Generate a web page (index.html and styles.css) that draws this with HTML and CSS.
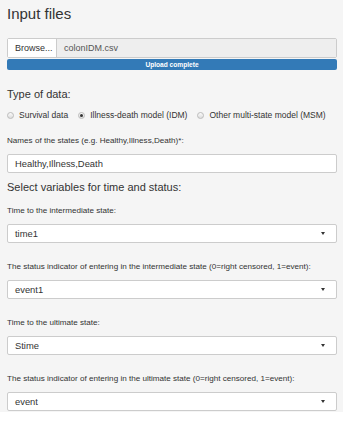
FILE: index.html
```html
<!DOCTYPE html>
<html>
  <head>
    <title>Input files</title>
    <meta charset="UTF-8" />
    <meta name="viewport" content="width=device-width, initial-scale=1" />
    <link rel="stylesheet" href="styles.css">
  </head>
  <body>
    <div class="well">
      <h3>Input files</h3>

      <div class="file-input">
        <span class="browse">Browse...</span>
        <span class="file-name">colonIDM.csv</span>
      </div>
      <div class="progress">Upload complete</div>

      <h4 class="type-title">Type of data:</h4>
      <div class="radios">
        <label class="radio"><span class="dot"></span>Survival data</label>
        <label class="radio"><span class="dot checked"></span>Illness-death model (IDM)</label>
        <label class="radio"><span class="dot"></span>Other multi-state model (MSM)</label>
      </div>

      <div class="form-group first">
        <label class="control-label">Names of the states (e.g. Healthy,Illness,Death)*:</label>
        <div class="text-input">Healthy,Illness,Death</div>
      </div>

      <h4 class="vars-title">Select variables for time and status:</h4>

      <div class="form-group">
        <label class="control-label">Time to the intermediate state:</label>
        <div class="select"><span>time1</span><span class="caret"></span></div>
      </div>

      <div class="form-group">
        <label class="control-label">The status indicator of entering in the intermediate state (0=right censored, 1=event):</label>
        <div class="select"><span>event1</span><span class="caret"></span></div>
      </div>

      <div class="form-group">
        <label class="control-label">Time to the ultimate state:</label>
        <div class="select"><span>Stime</span><span class="caret"></span></div>
      </div>

      <div class="form-group last">
        <label class="control-label">The status indicator of entering in the ultimate state (0=right censored, 1=event):</label>
        <div class="select"><span>event</span><span class="caret"></span></div>
      </div>
    </div>
  </body>
</html>
```

FILE: styles.css
```css
body {
  margin: 0;
  background-color: #fff;
  color: #333;
  font-family: "Liberation Sans", Arial, sans-serif;
  font-size: 8.4px;
}
.well {
  background-color: #f5f5f5;
  padding: 5px 6px 1px 7px;
}
h3 {
  margin: 0;
  font-size: 15px;
  font-weight: normal;
  line-height: 17px;
}
h4 {
  margin: 0;
  font-size: 11px;
  font-weight: normal;
  line-height: 13px;
}
.file-input {
  display: flex;
  height: 20px;
  margin-top: 16px;
  border: 1px solid #ccc;
  border-radius: 2px;
  box-sizing: border-box;
  font-size: 9px;
  line-height: 18px;
}
.browse {
  background-color: #fff;
  padding: 0 7px;
  border-right: 1px solid #ccc;
  width: 49px;
  box-sizing: border-box;
}
.file-name {
  flex: 1;
  background-color: #eee;
  padding: 0 7px;
  color: #555;
}
.progress {
  margin-top: 1px;
  height: 11px;
  line-height: 11px;
  background-color: #337ab7;
  border-radius: 2px;
  color: #fff;
  font-size: 6.6px;
  font-weight: bold;
  text-align: center;
}
.type-title {
  margin-top: 18px;
}
.radios {
  display: flex;
  gap: 10px;
  margin-top: 8px;
  line-height: 12px;
  font-size: 8.5px;
}
.radio {
  display: flex;
  align-items: center;
  gap: 5px;
}
.dot {
  width: 7px;
  height: 7px;
  border: 1px solid #bbb;
  border-radius: 50%;
  background: linear-gradient(#fafafa, #ddd);
  box-sizing: border-box;
  display: flex;
  align-items: center;
  justify-content: center;
}
.dot.checked::after {
  content: "";
  width: 3px;
  height: 3px;
  border-radius: 50%;
  background-color: #333;
}
.form-group {
  margin-top: 18px;
}
.form-group.first {
  margin-top: 14px;
}
.vars-title {
  margin-top: 8px;
}
.vars-title + .form-group {
  margin-top: 11px;
}
.control-label {
  display: block;
  font-size: 8.1px;
  line-height: 11px;
  margin-bottom: 8px;
}
.text-input,
.select {
  height: 19px;
  background-color: #fff;
  border: 1px solid #ccc;
  border-radius: 2px;
  box-sizing: border-box;
  padding: 0 11px 0 7px;
  line-height: 17px;
  font-size: 9.4px;
}
.select {
  display: flex;
  align-items: center;
  justify-content: space-between;
}
.caret {
  width: 0;
  height: 0;
  border-left: 2.5px solid transparent;
  border-right: 2.5px solid transparent;
  border-top: 3px solid #333;
}
.last {
  margin-bottom: 0;
}
```
